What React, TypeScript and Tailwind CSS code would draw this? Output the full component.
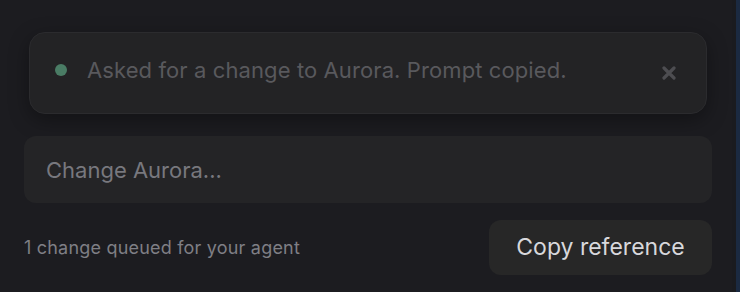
import React, { useState } from "react";

const App = () => {
  const [value, setValue] = useState("");

  return (
    <div
      className="w-[740px] h-[292px] flex bg-[#1c1c20] overflow-hidden"
      style={{ fontFamily: "Inter, 'Noto Sans', sans-serif" }}
    >
      <div className="flex-1 flex flex-col pl-[24px] pr-[20px] pt-[32px]">
        {/* ---------------- Toast ---------------- */}
        <div className="mx-[5px] h-[82px] flex items-center rounded-[16px] border border-[#2b2b2e] bg-[#232325] shadow-[0_6px_20px_rgba(0,0,0,0.35)] pl-[25px] pr-[30px] pb-[6px]">
          <span className="w-[12px] h-[12px] rounded-full bg-[#4a7c65] shrink-0" />
          <p className="ml-[20px] flex-1 text-[22px] tracking-[0.1px] text-[#59595d]">
            Asked for a change to Aurora. Prompt copied.
          </p>
          <svg width="14" height="14" viewBox="0 0 14 14" className="shrink-0 mb-[-6px]">
            <path
              d="M2 2L12 12M12 2L2 12"
              stroke="#4d4d51"
              strokeWidth="3.2"
              strokeLinecap="round"
            />
          </svg>
        </div>

        {/* ---------------- Input ---------------- */}
        <input
          type="text"
          value={value}
          onChange={(e) => setValue(e.target.value)}
          placeholder="Change Aurora..."
          className="mt-[22px] h-[67px] w-full rounded-[12px] bg-[#242426] px-[22px] text-[22px] text-[#d8d8dc] placeholder:text-[#78787e] focus:outline-none"
        />

        {/* ---------------- Footer ---------------- */}
        <div className="mt-[17px] flex items-center justify-between">
          <p className="text-[18px] tracking-[0.2px] text-[#7f7f85]">1 change queued for your agent</p>
          <button className="h-[55px] w-[223px] rounded-[12px] bg-[#272727] text-[23px] text-[#d8d8dc]">
            Copy reference
          </button>
        </div>
      </div>
      <div className="w-[4px] bg-[#1a1b1f]" />
      <div className="w-[4px] bg-[#1b2a41]" />
    </div>
  );
};

export default App;
